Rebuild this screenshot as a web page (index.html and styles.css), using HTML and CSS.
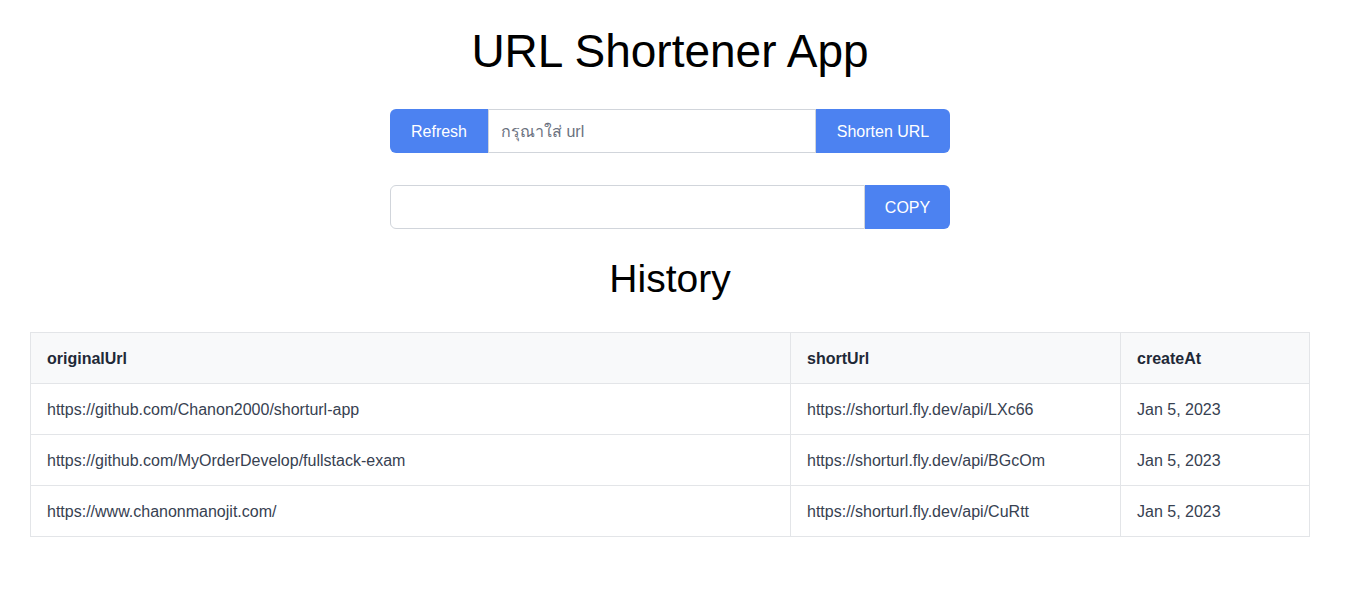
FILE: index.html
```html
<!DOCTYPE html>
<html lang="en">
<head>
<meta charset="utf-8">
<title>URL Shortener App</title>
<link rel="stylesheet" href="styles.css">
</head>
<body>
<main class="app">
  <h1 class="title">URL Shortener App</h1>
  <div class="group">
    <button class="btn btn-left">Refresh</button>
    <input class="field" type="text" placeholder="กรุณาใส่ url">
    <button class="btn btn-right btn-shorten">Shorten URL</button>
  </div>
  <div class="group group-copy">
    <input class="field field-left" type="text">
    <button class="btn btn-right btn-copy">COPY</button>
  </div>
  <h2 class="subtitle">History</h2>
  <table class="history">
    <thead>
      <tr><th class="c1">originalUrl</th><th class="c2">shortUrl</th><th class="c3">createAt</th></tr>
    </thead>
    <tbody>
      <tr><td>https://github.com/Chanon2000/shorturl-app</td><td>https://shorturl.fly.dev/api/LXc66</td><td>Jan 5, 2023</td></tr>
      <tr><td>https://github.com/MyOrderDevelop/fullstack-exam</td><td>https://shorturl.fly.dev/api/BGcOm</td><td>Jan 5, 2023</td></tr>
      <tr><td>https://www.chanonmanojit.com/</td><td>https://shorturl.fly.dev/api/CuRtt</td><td>Jan 5, 2023</td></tr>
    </tbody>
  </table>
</main>
</body>
</html>
```

FILE: styles.css
```css
* { box-sizing: border-box; }
html, body { margin: 0; padding: 0; background: #fff; }
body {
  font-family: "Liberation Sans", Arial, "Noto Sans", sans-serif;
  color: #000;
}
.app {
  display: flex;
  flex-direction: column;
  align-items: center;
  width: 1280px;
  margin: 0 30px;
}
.title {
  font-weight: 400;
  font-size: 46px;
  line-height: 52px;
  margin: 25px 0 0;
}
.group {
  display: flex;
  width: 560px;
  height: 44px;
  margin-top: 32px;
}
.group-copy { margin-top: 32px; }
.btn {
  border: none;
  background: #4c82f1;
  color: #fff;
  font-family: "Liberation Sans", Arial, sans-serif;
  font-size: 16px;
  padding: 2px 0 0;
  cursor: pointer;
}
.btn-left { width: 98px; border-radius: 6px 0 0 6px; }
.btn-right { border-radius: 0 6px 6px 0; }
.btn-shorten { width: 134px; }
.btn-copy { width: 85px; }
.field {
  flex: 1;
  min-width: 0;
  border: 1px solid #d1d5db;
  font-family: "Liberation Sans", Arial, "Noto Sans", sans-serif;
  font-size: 16px;
  padding: 2px 12px 0;
  color: #374151;
  outline: none;
}
.field::placeholder { color: #6b7280; }
.field-left { border-radius: 6px 0 0 6px; }
.subtitle {
  font-weight: 400;
  font-size: 39px;
  line-height: 44px;
  margin: 28px 0 0;
}
.history {
  width: 100%;
  margin-top: 31px;
  border-collapse: collapse;
  font-size: 16px;
  color: #374151;
}
.history th, .history td {
  border: 1px solid #e3e5e8;
  text-align: left;
  padding: 2px 16px 0;
  height: 51px;
}
.history th {
  background: #f8f9fa;
  color: #1f2937;
  font-weight: 700;
}
.c1 { width: 760px; }
.c2 { width: 330px; }
```
